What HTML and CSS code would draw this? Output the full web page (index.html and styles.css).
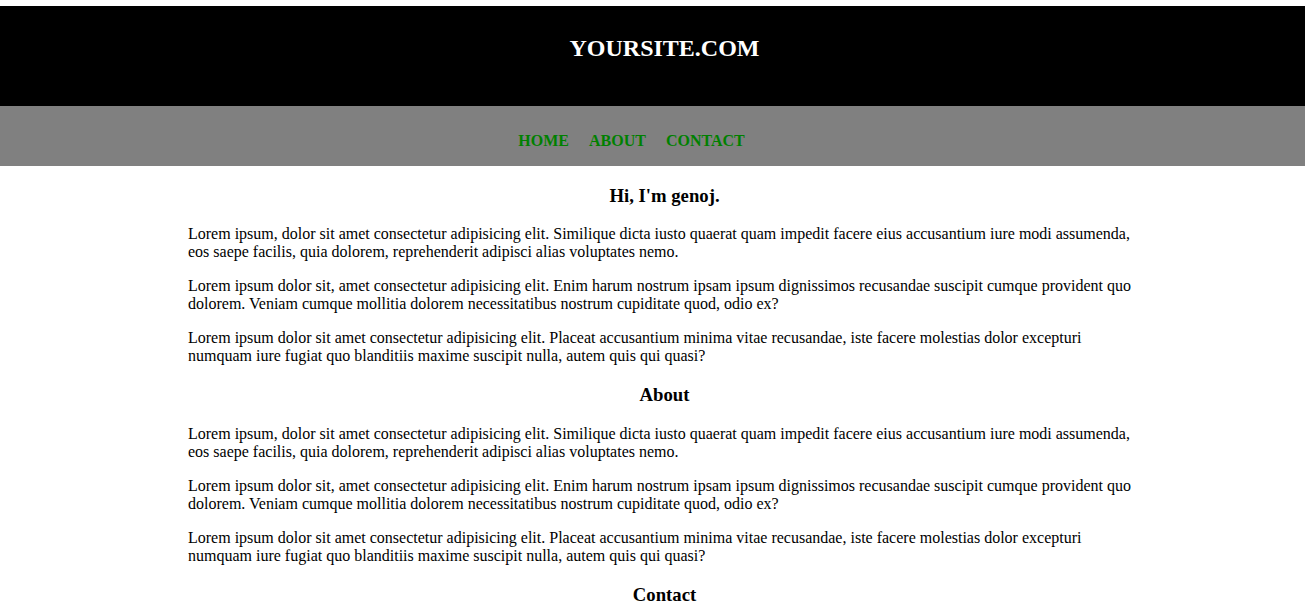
FILE: index.html
```html
<!DOCTYPE html>
<html>
<head>
<meta charset="utf-8">
<title>YOURSITE.COM</title>
<link rel="stylesheet" href="styles.css">
</head>
<body>
<header class="site-header">
  <h1 class="site-title">YOURSITE.COM</h1>
</header>
<nav class="site-nav">
  <ul class="nav-list">
    <li><a href="#home">HOME</a></li>
    <li><a href="#about">ABOUT</a></li>
    <li><a href="#contact">CONTACT</a></li>
  </ul>
</nav>
<main class="content">
  <h3 class="section-title">Hi, I'm genoj.</h3>
  <p>Lorem ipsum, dolor sit amet consectetur adipisicing elit. Similique dicta iusto quaerat quam impedit facere eius accusantium iure modi assumenda, eos saepe facilis, quia dolorem, reprehenderit adipisci alias voluptates nemo.</p>
  <p>Lorem ipsum dolor sit, amet consectetur adipisicing elit. Enim harum nostrum ipsam ipsum dignissimos recusandae suscipit cumque provident quo dolorem. Veniam cumque mollitia dolorem necessitatibus nostrum cupiditate quod, odio ex?</p>
  <p>Lorem ipsum dolor sit amet consectetur adipisicing elit. Placeat accusantium minima vitae recusandae, iste facere molestias dolor excepturi numquam iure fugiat quo blanditiis maxime suscipit nulla, autem quis qui quasi?</p>
  <h3 class="section-title" id="about">About</h3>
  <p>Lorem ipsum, dolor sit amet consectetur adipisicing elit. Similique dicta iusto quaerat quam impedit facere eius accusantium iure modi assumenda, eos saepe facilis, quia dolorem, reprehenderit adipisci alias voluptates nemo.</p>
  <p>Lorem ipsum dolor sit, amet consectetur adipisicing elit. Enim harum nostrum ipsam ipsum dignissimos recusandae suscipit cumque provident quo dolorem. Veniam cumque mollitia dolorem necessitatibus nostrum cupiditate quod, odio ex?</p>
  <p>Lorem ipsum dolor sit amet consectetur adipisicing elit. Placeat accusantium minima vitae recusandae, iste facere molestias dolor excepturi numquam iure fugiat quo blanditiis maxime suscipit nulla, autem quis qui quasi?</p>
  <h3 class="section-title" id="contact">Contact</h3>
  <p>Lorem ipsum, dolor sit amet consectetur adipisicing elit. Similique dicta iusto quaerat quam impedit facere eius accusantium iure modi assumenda, eos saepe facilis, quia dolorem, reprehenderit adipisci alias voluptates nemo.</p>
</main>
</body>
</html>
```

FILE: styles.css
```css
html, body {
  margin: 0;
  padding: 0;
}
body {
  padding-top: 6px;
  font-family: "Liberation Serif", "Times New Roman", serif;
  font-size: 16px;
  color: #000;
  background: #fff;
}
.site-header {
  background: #000;
  height: 100px;
  box-sizing: border-box;
  padding: 29px 0 0 24px;
}
.site-title {
  margin: 0;
  font-size: 24px;
  font-weight: bold;
  color: #fff;
  text-align: center;
  line-height: normal;
}
.site-nav {
  background: #808080;
  height: 60px;
  box-sizing: border-box;
  padding-top: 26px;
}
.nav-list {
  list-style: none;
  margin: 0;
  padding: 0 42px 0 0;
  display: flex;
  justify-content: center;
  gap: 20px;
}
.nav-list a {
  color: #008000;
  font-weight: bold;
  text-decoration: none;
  line-height: normal;
}
.content {
  width: 953px;
  margin: 0 auto;
  padding-left: 24px;
  padding-bottom: 20px;
}
.section-title {
  text-align: center;
  font-size: 18.72px;
  margin: 18.72px 0;
}
.content p {
  margin: 16px 0;
}
```
